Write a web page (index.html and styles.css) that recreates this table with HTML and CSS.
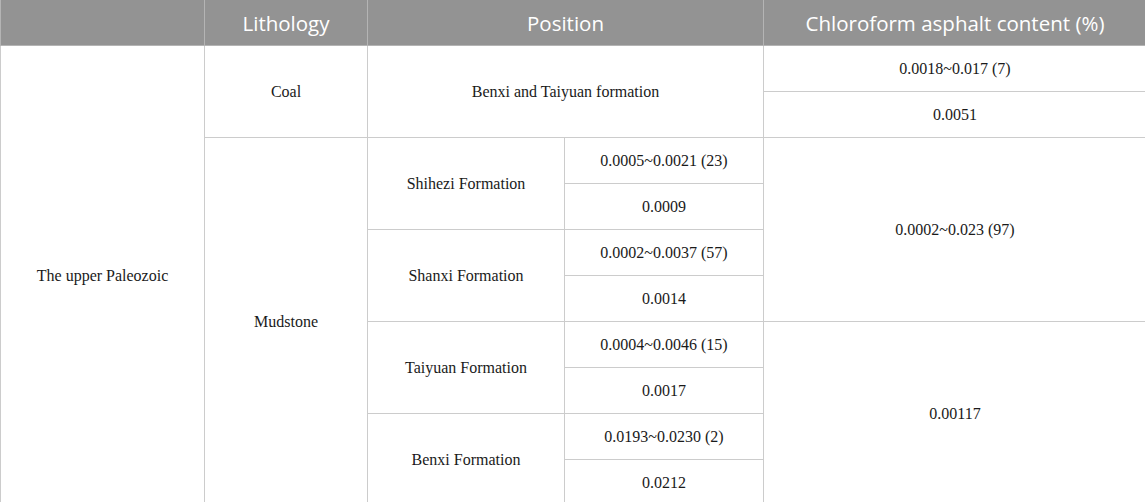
FILE: index.html
```html
<!DOCTYPE html>
<html>
<head>
<meta charset="utf-8">
<link rel="stylesheet" href="styles.css">
</head>
<body>
<table class="data">
  <colgroup>
    <col class="c1"><col class="c2"><col class="c3"><col class="c4"><col class="c5">
  </colgroup>
  <thead>
    <tr>
      <th></th>
      <th>Lithology</th>
      <th colspan="2">Position</th>
      <th>Chloroform asphalt content (%)</th>
    </tr>
  </thead>
  <tbody>
    <tr>
      <td rowspan="10">The upper Paleozoic</td>
      <td rowspan="2">Coal</td>
      <td rowspan="2" colspan="2">Benxi and Taiyuan formation</td>
      <td>0.0018~0.017 (7)</td>
    </tr>
    <tr><td>0.0051</td></tr>
    <tr>
      <td rowspan="8">Mudstone</td>
      <td rowspan="2">Shihezi Formation</td>
      <td>0.0005~0.0021 (23)</td>
      <td rowspan="4">0.0002~0.023 (97)</td>
    </tr>
    <tr><td>0.0009</td></tr>
    <tr>
      <td rowspan="2">Shanxi Formation</td>
      <td>0.0002~0.0037 (57)</td>
    </tr>
    <tr><td>0.0014</td></tr>
    <tr>
      <td rowspan="2">Taiyuan Formation</td>
      <td>0.0004~0.0046 (15)</td>
      <td rowspan="4">0.00117</td>
    </tr>
    <tr><td>0.0017</td></tr>
    <tr>
      <td rowspan="2">Benxi Formation</td>
      <td>0.0193~0.0230 (2)</td>
    </tr>
    <tr><td>0.0212</td></tr>
  </tbody>
</table>
</body>
</html>
```
FILE: styles.css
```css
html, body {
  margin: 0;
  padding: 0;
  background: #ffffff;
}
.data {
  border-collapse: collapse;
  table-layout: fixed;
  width: 1146px;
  font-family: "Liberation Serif", "Times New Roman", serif;
  font-size: 16px;
  line-height: 20px;
  color: #1a1a1a;
}
.c1 { width: 204px; }
.c2 { width: 163px; }
.c3 { width: 197px; }
.c4 { width: 199px; }
.c5 { width: 383px; }
.data th {
  background: #939393;
  color: #ffffff;
  font-family: "Open Sans", "Liberation Sans", sans-serif;
  font-weight: 400;
  font-size: 20.5px;
  line-height: 24px;
  height: 45px;
  padding: 0;
  border: 1px solid #b4b4b4;
  border-top: none;
  text-align: center;
  vertical-align: middle;
}
.data td {
  height: 45px;
  padding: 0;
  border: 1px solid #cccccc;
  text-align: center;
  vertical-align: middle;
}
```
